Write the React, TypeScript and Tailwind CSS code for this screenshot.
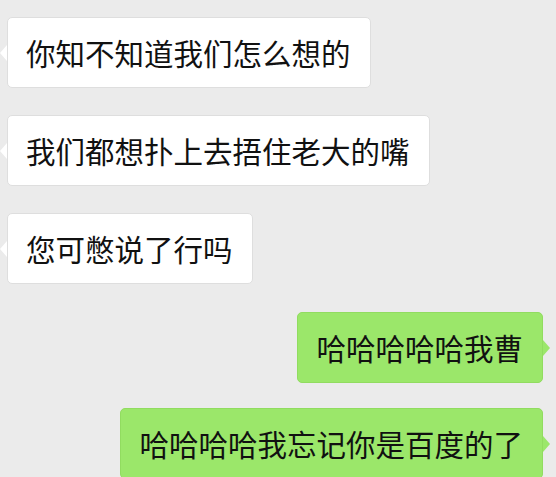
const messages = [
  { text: "你知不知道我们怎么想的", mine: false, gap: "mt-[17px]" },
  { text: "我们都想扑上去捂住老大的嘴", mine: false, gap: "mt-[27px]" },
  { text: "您可憋说了行吗", mine: false, gap: "mt-[27px]" },
  { text: "哈哈哈哈哈我曹", mine: true, gap: "mt-[28px]" },
  { text: "哈哈哈哈我忘记你是百度的了", mine: true, gap: "mt-[25px]" },
];

function Bubble({ text, mine }: { text: string; mine: boolean }) {
  return (
    <div
      className={
        "relative rounded-[5px] pl-[18px] pr-[19px] py-[17px] leading-[35px] text-[29.5px] text-[#111111] " +
        (mine
          ? "bg-[#9be76a] border border-[#91dc60]"
          : "bg-white border border-[#dedede]")
      }
    >
      {mine ? (
        <span className="absolute -right-[8px] top-[27px] border-y-[8px] border-y-transparent border-l-[7px] border-l-[#9be76a]" />
      ) : (
        <span className="absolute -left-[8px] top-[27px] border-y-[8px] border-y-transparent border-r-[7px] border-r-white" />
      )}
      {text}
    </div>
  );
}

export default function App() {
  return (
    <div
      className="h-[477px] w-[556px] overflow-hidden bg-[#ebebeb] pl-[7px] pr-[13px]"
      style={{ fontFamily: '"Noto Sans CJK SC", "Noto Sans", sans-serif' }}
    >
      <div className="flex flex-col">
        {messages.map((m, i) => (
          <div key={i} className={"flex " + (m.mine ? "justify-end " : "justify-start ") + m.gap}>
            <Bubble text={m.text} mine={m.mine} />
          </div>
        ))}
      </div>
    </div>
  );
}
